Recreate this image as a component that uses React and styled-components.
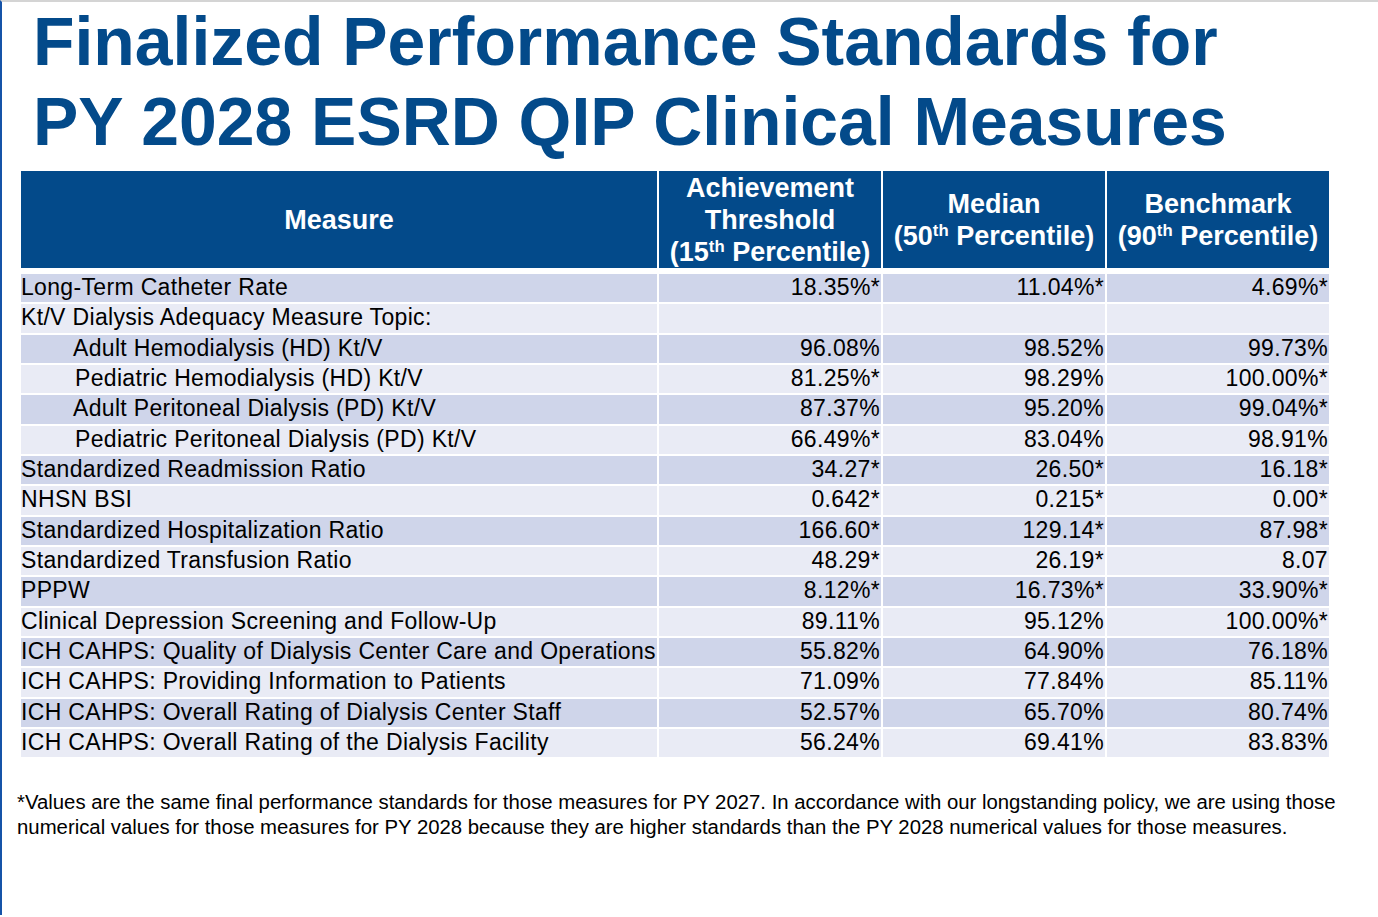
import React from 'react';
import styled, { createGlobalStyle } from 'styled-components';

const GlobalStyle = createGlobalStyle`
  html, body {
    margin: 0;
    padding: 0;
    background: #ffffff;
  }
  body {
    font-family: 'Liberation Sans', Arial, sans-serif;
  }
`;

const rows = [
  { name: 'Long-Term Catheter Rate', vals: ['18.35%*', '11.04%*', '4.69%*'] },
  { name: 'Kt/V Dialysis Adequacy Measure Topic:', vals: ['', '', ''] },
  { name: 'Adult Hemodialysis (HD) Kt/V', indent: 52, vals: ['96.08%', '98.52%', '99.73%'] },
  { name: 'Pediatric Hemodialysis (HD) Kt/V', indent: 54, vals: ['81.25%*', '98.29%', '100.00%*'] },
  { name: 'Adult Peritoneal Dialysis (PD) Kt/V', indent: 52, vals: ['87.37%', '95.20%', '99.04%*'] },
  { name: 'Pediatric Peritoneal Dialysis (PD) Kt/V', indent: 54, vals: ['66.49%*', '83.04%', '98.91%'] },
  { name: 'Standardized Readmission Ratio', vals: ['34.27*', '26.50*', '16.18*'] },
  { name: 'NHSN BSI', vals: ['0.642*', '0.215*', '0.00*'] },
  { name: 'Standardized Hospitalization Ratio', vals: ['166.60*', '129.14*', '87.98*'] },
  { name: 'Standardized Transfusion Ratio', vals: ['48.29*', '26.19*', '8.07'] },
  { name: 'PPPW', vals: ['8.12%*', '16.73%*', '33.90%*'] },
  { name: 'Clinical Depression Screening and Follow-Up', vals: ['89.11%', '95.12%', '100.00%*'] },
  { name: 'ICH CAHPS: Quality of Dialysis Center Care and Operations', vals: ['55.82%', '64.90%', '76.18%'] },
  { name: 'ICH CAHPS: Providing Information to Patients', vals: ['71.09%', '77.84%', '85.11%'] },
  { name: 'ICH CAHPS: Overall Rating of Dialysis Center Staff', vals: ['52.57%', '65.70%', '80.74%'] },
  { name: 'ICH CAHPS: Overall Rating of the Dialysis Facility', vals: ['56.24%', '69.41%', '83.83%'] },
];

const App = () => {
  return (
    <Page>
      <GlobalStyle />
      <Title>
        Finalized Performance Standards for
        <br />
        PY 2028 ESRD QIP Clinical Measures
      </Title>
      <Table>
        <colgroup>
          <col style={{ width: 638 }} />
          <col style={{ width: 224 }} />
          <col style={{ width: 224 }} />
          <col style={{ width: 222 }} />
        </colgroup>
        <thead>
          <tr>
            <HeadCell>Measure</HeadCell>
            <HeadCell>
              Achievement
              <br />
              Threshold
              <br />
              (15<Sup>th</Sup> Percentile)
            </HeadCell>
            <HeadCell>
              Median
              <br />
              (50<Sup>th</Sup> Percentile)
            </HeadCell>
            <HeadCell $last>
              Benchmark
              <br />
              (90<Sup>th</Sup> Percentile)
            </HeadCell>
          </tr>
        </thead>
        <tbody>
          {rows.map((row, i) => (
            <Row key={row.name} $odd={i % 2 === 0}>
              <NameCell $indent={row.indent || 0}>{row.name}</NameCell>
              {row.vals.map((v, j) => (
                <ValueCell key={j} $last={j === 2}>
                  {v}
                </ValueCell>
              ))}
            </Row>
          ))}
        </tbody>
      </Table>
      <Footnote>
        *Values are the same final performance standards for those measures for PY 2027. In accordance with our
        longstanding policy, we are using those numerical values for those measures for PY 2028 because they are
        higher standards than the PY 2028 numerical values for those measures.
      </Footnote>
    </Page>
  );
};
export default App;

const Page = styled.div`
  min-height: 915px;
  border-top: 2px solid #d4d4d4;
  border-left: 2px solid #1553a8;
  box-sizing: border-box;
  background: #ffffff;
`;

const Title = styled.h1`
  margin: 0;
  padding: 0 0 0 31px;
  font-family: 'Liberation Sans', Arial, sans-serif;
  font-weight: bold;
  font-size: 67.9px;
  line-height: 80px;
  color: #034a8a;
  white-space: nowrap;
`;

const Table = styled.table`
  margin: 9px 0 0 19px;
  border-collapse: separate;
  border-spacing: 0;
  table-layout: fixed;
  width: 1308px;
  font-family: 'Liberation Sans', Arial, sans-serif;
`;

const HeadCell = styled.th`
  background: #034a8a;
  color: #ffffff;
  font-weight: bold;
  font-size: 27px;
  line-height: 32px;
  height: 103px;
  padding: 1px 0 0;
  text-align: center;
  vertical-align: middle;
  border-right: ${(p) => (p.$last ? '0' : '2px solid #ffffff')};
  border-bottom: 6px solid #ffffff;
  box-sizing: border-box;
  white-space: nowrap;
`;

const Sup = styled.sup`
  font-size: 0.62em;
  line-height: 0;
  vertical-align: 0.55em;
`;

const Row = styled.tr`
  background: ${(p) => (p.$odd ? '#cfd5ea' : '#e9ebf5')};
`;

const NameCell = styled.td`
  height: 30.33px;
  box-sizing: border-box;
  padding: 0 0 2px ${(p) => p.$indent}px;
  font-size: 23px;
  letter-spacing: 0.33px;
  line-height: 24px;
  color: #000000;
  white-space: nowrap;
  vertical-align: middle;
  border-right: 2px solid #ffffff;
  border-bottom: 2px solid #ffffff;
`;

const ValueCell = styled.td`
  height: 30.33px;
  box-sizing: border-box;
  padding: 0 1px 2px 0;
  font-size: 23px;
  letter-spacing: 0.33px;
  line-height: 24px;
  color: #000000;
  text-align: right;
  white-space: nowrap;
  vertical-align: middle;
  border-right: ${(p) => (p.$last ? '0' : '2px solid #ffffff')};
  border-bottom: 2px solid #ffffff;
`;

const Footnote = styled.p`
  margin: 31px 0 0 15px;
  width: 1350px;
  font-family: 'Liberation Sans', Arial, sans-serif;
  font-size: 20.35px;
  line-height: 25px;
  color: #000000;
`;
